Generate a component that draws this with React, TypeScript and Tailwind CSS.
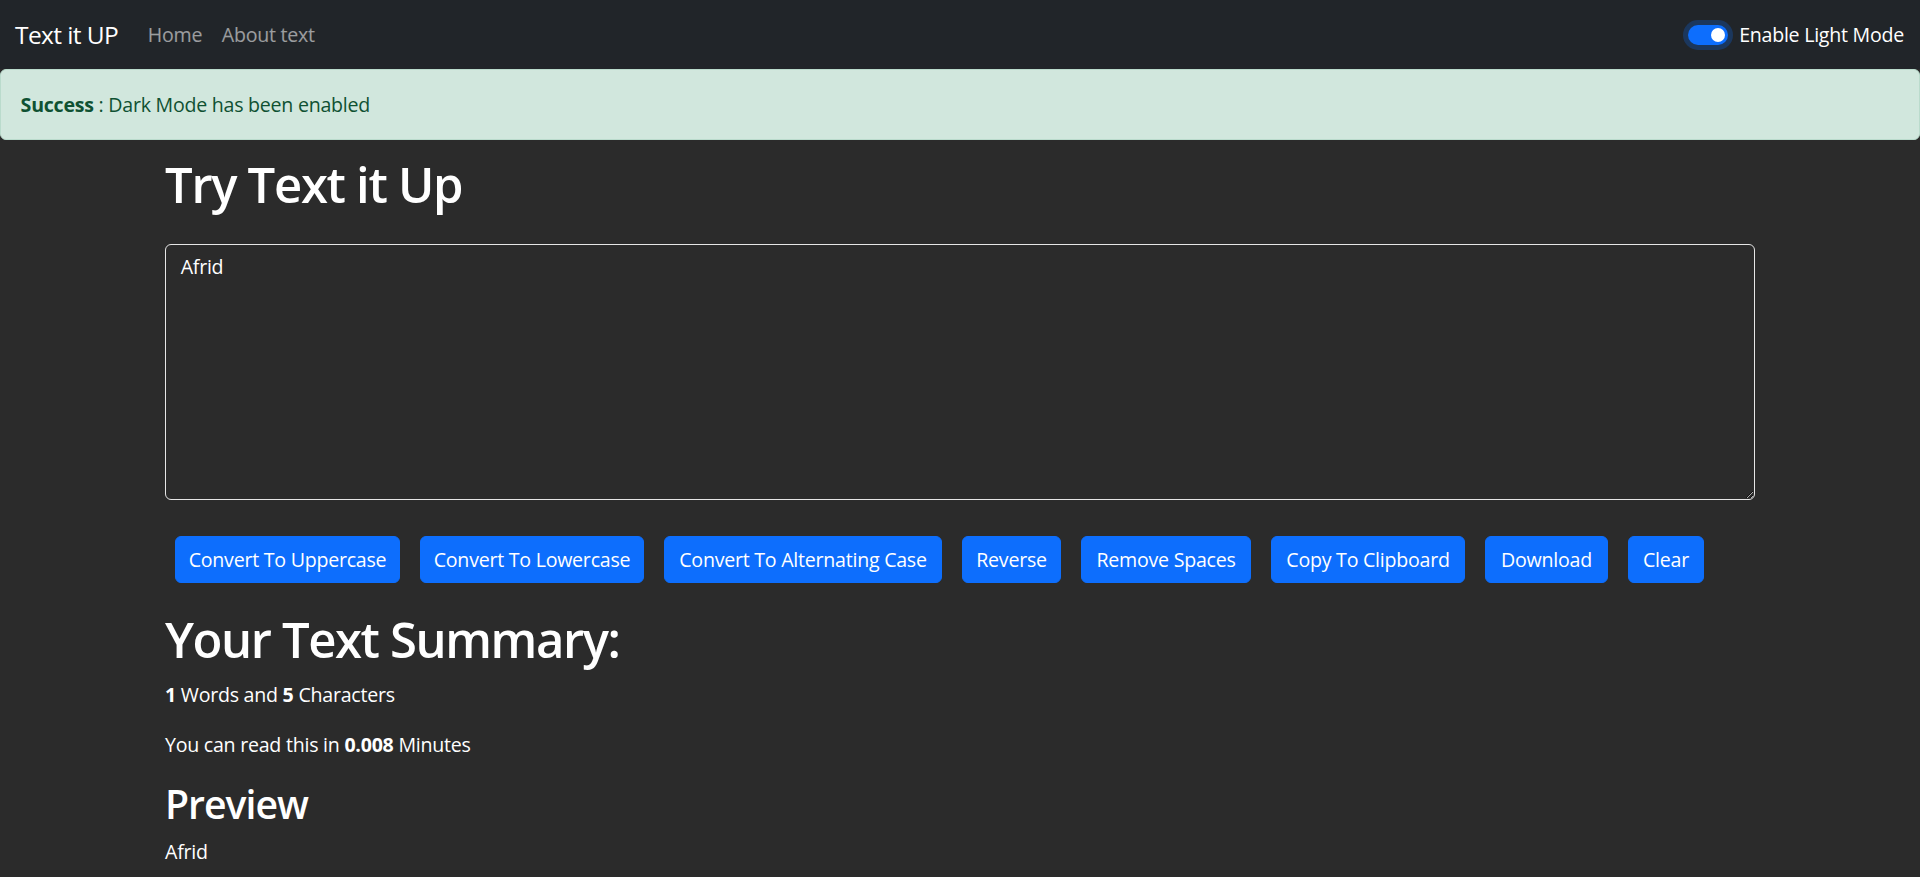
import React from 'react';

const buttons: { label: string; w: string }[] = [
  { label: 'Convert To Uppercase', w: 'w-[225px]' },
  { label: 'Convert To Lowercase', w: 'w-[224px]' },
  { label: 'Convert To Alternating Case', w: 'w-[278px]' },
  { label: 'Reverse', w: 'w-[99px]' },
  { label: 'Remove Spaces', w: 'w-[170px]' },
  { label: 'Copy To Clipboard', w: 'w-[194px]' },
  { label: 'Download', w: 'w-[123px]' },
  { label: 'Clear', w: 'w-[76px]' },
];

const Navbar: React.FC = () => {
  return (
    <nav className="h-[69px] bg-[#212529] flex items-center pl-[15px] pr-[16px]">
      <a className="w-[123px] text-[24.5px] leading-[37px] tracking-[-0.6px] text-white">Text it UP</a>
      <a className="px-[9.8px] text-[19.6px] leading-[29px] text-white/55">Home</a>
      <a className="px-[9.8px] text-[19.6px] leading-[29px] text-white/55">About text</a>
      <div className="ml-auto flex items-center">
        <div className="relative w-[40px] h-[20px] rounded-full bg-[#0d6efd] shadow-[0_0_0_5px_rgba(13,110,253,0.25)]">
          <span className="absolute right-[3px] top-[3px] w-[14px] h-[14px] rounded-full bg-white" />
        </div>
        <label className="ml-[11px] text-[19.6px] leading-[29px] text-white">Enable Light Mode</label>
      </div>
    </nav>
  );
};

export default function App() {
  return (
    <div className="min-h-[877px] bg-[#2b2b2b] text-white tracking-[-0.25px] font-['Open_Sans','Noto_Sans',sans-serif]">
      <Navbar />
      <div className="h-[71px] rounded-[6px] border border-[#badbcc] bg-[#d1e7dd] px-[19.6px] py-[19.6px] text-[19.6px] leading-[29.4px] text-[#0f5132]">
        <strong className="font-bold">Success</strong> : Dark Mode has been enabled
      </div>

      <div className="mx-auto w-[1590px]">
        <h1 className="mt-[15px] text-[49px] leading-[58.8px] font-semibold tracking-[-1.3px]">Try Text it Up</h1>
        <textarea
          className="mt-[30px] block w-full h-[256px] rounded-[6px] border border-[#e6e6e6] bg-[#2b2b2b] px-[14.7px] py-[7.35px] text-[19.6px] leading-[29.4px] text-white outline-none"
          defaultValue="Afrid"
        />
        <div className="mt-[36px] flex gap-[20px] pl-[10px]">
          {buttons.map((b) => (
            <button
              key={b.label}
              className={`${b.w} h-[47px] shrink-0 rounded-[6px] border border-[#0d6efd] bg-[#0d6efd] text-[19.6px] leading-[29.4px] text-white whitespace-nowrap`}
            >
              {b.label}
            </button>
          ))}
        </div>

        <h1 className="mt-[27px] text-[49px] leading-[58.8px] font-semibold tracking-[-1.4px]">Your Text Summary:</h1>
        <p className="mt-[11px] text-[19.6px] leading-[29.4px]">
          <b className="font-bold">1</b> Words and <b className="font-bold">5</b> Characters
        </p>
        <p className="mt-[21px] text-[19.6px] leading-[29.4px]">
          You can read this in <b className="font-bold">0.008</b> Minutes
        </p>
        <h2 className="mt-[21px] text-[39.2px] leading-[47px] font-semibold tracking-[-1px]">Preview</h2>
        <p className="mt-[10px] text-[19.6px] leading-[29.4px]">Afrid</p>
      </div>
    </div>
  );
}
